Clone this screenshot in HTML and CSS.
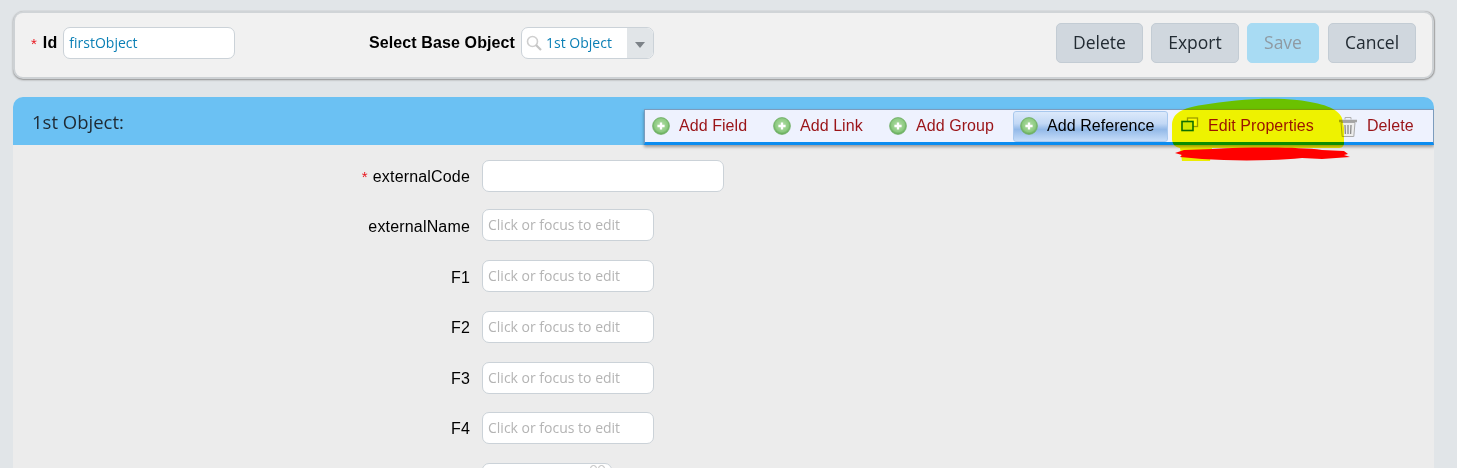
FILE: index.html
```html
<!DOCTYPE html>
<html lang="en">
<head>
<meta charset="utf-8">
<title>1st Object</title>
<link rel="stylesheet" href="styles.css">
</head>
<body>
<svg class="defs" width="0" height="0" aria-hidden="true">
  <defs>
    <radialGradient id="gball" cx="50%" cy="45%" r="55%">
      <stop offset="0" stop-color="#b4ddaa"/>
      <stop offset="0.7" stop-color="#8ecb82"/>
      <stop offset="1" stop-color="#5fa852"/>
    </radialGradient>
    <symbol id="plus" viewBox="0 0 18 18">
      <circle cx="9" cy="9" r="8.4" fill="url(#gball)" stroke="#74b06b" stroke-width="0.8"/>
      <path d="M9 5.4v7.2M5.4 9h7.2" stroke="#fff" stroke-width="2.3"/>
    </symbol>
  </defs>
</svg>
<header class="toolbar">
  <div class="field-id">
    <span class="req">*</span>
    <label class="strong">Id</label>
    <div class="input id-input">firstObject</div>
  </div>
  <div class="field-base">
    <label class="strong">Select Base Object</label>
    <div class="select">
      <svg class="search" width="16" height="16" viewBox="0 0 16 16"><circle cx="6.5" cy="6.5" r="5" fill="none" stroke="#cfcfcf" stroke-width="1.6"/><path d="M10 10l5 5" stroke="#c4c4c4" stroke-width="2.2"/></svg>
      <span class="select-value">1st Object</span>
      <span class="select-arrow"><i class="caret"></i></span>
    </div>
  </div>
  <div class="actions">
    <button class="btn btn-delete">Delete</button>
    <button class="btn btn-export">Export</button>
    <button class="btn btn-save">Save</button>
    <button class="btn btn-cancel">Cancel</button>
  </div>
</header>
<main class="panel">
  <div class="panel-head">
    <h1 class="panel-title">1st Object:</h1>
    <nav class="menu">
      <a class="item item-field"><svg class="ico"><use href="#plus"/></svg>Add Field</a>
      <a class="item item-link"><svg class="ico"><use href="#plus"/></svg>Add Link</a>
      <a class="item item-group"><svg class="ico"><use href="#plus"/></svg>Add Group</a>
      <a class="item item-ref"><svg class="ico"><use href="#plus"/></svg>Add Reference</a>
      <a class="item item-edit"><svg class="ico" viewBox="0 0 18 18"><rect x="6.5" y="1" width="10" height="8.5" fill="#fdfdc0" stroke="#9c9c30" stroke-width="1.3"/><rect x="1" y="4.5" width="11" height="9" fill="#d4e860" stroke="#0f6e0f" stroke-width="1.6"/></svg>Edit Properties</a>
      <a class="item item-del"><svg class="ico-trash" viewBox="0 0 20 21"><path d="M1 5h18" stroke="#a4a4a4" stroke-width="2.6"/><path d="M7 3.5V1.5h6v2" fill="none" stroke="#b0b0b0"/><path d="M3 6.5h14l-1.2 14H4.2z" fill="#ededed" stroke="#a8a8a8"/><path d="M7 9l.4 9M10 9v9M13 9l-.4 9" stroke="#8a8a8a" stroke-width="1.3"/></svg>Delete</a>
    </nav>
  </div>
  <form class="form">
    <div class="row row-first"><label class="lab"><span class="req">*</span> externalCode</label><div class="input wide"></div></div>
    <div class="row"><label class="lab lab-low">externalName</label><div class="input ph">Click or focus to edit</div></div>
    <div class="row"><label class="lab lab-low">F1</label><div class="input ph">Click or focus to edit</div></div>
    <div class="row"><label class="lab">F2</label><div class="input ph">Click or focus to edit</div></div>
    <div class="row row-short"><label class="lab">F3</label><div class="input ph">Click or focus to edit</div></div>
    <div class="row"><label class="lab">F4</label><div class="input ph">Click or focus to edit</div></div>
    <div class="row"><label class="lab"></label><div class="input cut"><i class="cut-mark"></i><i class="cut-mark"></i></div></div>
  </form>
</main>
<svg class="scribble hl-layer" width="200" height="75" viewBox="0 0 200 75" aria-hidden="true">
  <path class="hl" d="M0 26C1 15 10 10 30 7C60 2 95 -1 125 2C150 5 166 10 170 20L172 30L172 46C171 49 170 50 166 50L40 50L38 63L10 63L8 50C3 49 1 47 0 42Z"/>
</svg>
<svg class="scribble" width="200" height="75" viewBox="0 0 200 75" aria-hidden="true">
  <path class="red" d="M3 55L12 52L40 51C80 49 125 49 150 52L172 53L176 56L172 57L178 59L150 61L130 60C100 63 60 63 30 61L8 59L10 57Z"/>
</svg>
</body>
</html>
```

FILE: styles.css
```css
* { box-sizing: border-box; }
html, body { margin: 0; height: 468px; overflow: hidden; }
body {
  position: relative;
  padding: 11px 23px 0 13px;
  background: #e1e5e8;
  font-family: "Liberation Sans", Arial, sans-serif;
  color: #000;
}
.defs { position: absolute; }

.toolbar {
  display: flex;
  align-items: center;
  height: 68px;
  padding: 0 16px 4px 16px;
  background: #f1f1f1;
  border: 2px solid #cdd1d4;
  border-top-color: #d0d4d7;
  border-radius: 10px;
  box-shadow: 0 1px 2px #8d8d8d, 1px 0 1px #b0b0b0;
}
.field-id { display: flex; align-items: center; width: 338px; }
.req { color: #e8141c; font-size: 15px; }
.strong { font-weight: 700; font-size: 16px; letter-spacing: .11px; }
.field-id .strong { margin: 0 6px 0 6px; }
.field-base { display: flex; align-items: center; gap: 6px; }

.input {
  height: 32px;
  width: 172px;
  padding: 0 5px;
  background: #fff;
  border: 1px solid #cbd2d8;
  border-radius: 7px;
  font-family: "Open Sans", sans-serif;
  font-size: 14px;
  line-height: 30px;
  white-space: nowrap;
}
.id-input { color: #0a7fb5; }
.select {
  display: flex;
  align-items: center;
  width: 133px;
  height: 32px;
  background: #fff;
  border: 1px solid #cbd2d8;
  border-radius: 7px;
  overflow: hidden;
  font-family: "Open Sans", sans-serif;
  font-size: 14px;
  color: #0a7fb5;
}
.search { margin-left: 4px; flex: none; }
.select-value { margin: 0 0 2px 4px; flex: 1; white-space: nowrap; }
.select-arrow {
  display: flex;
  align-items: center;
  justify-content: center;
  width: 26px;
  height: 100%;
  padding-top: 4px;
  background: #e1e5e8;
}
.caret {
  border-left: 5px solid transparent;
  border-right: 5px solid transparent;
  border-top: 6px solid #7c8288;
}

.actions { margin-left: auto; display: flex; align-items: center; }
.btn {
  height: 40px;
  padding: 0 0 2px;
  background: #d0d7de;
  border: 1px solid #c3ccd4;
  border-radius: 5px;
  font-family: "Open Sans", sans-serif;
  font-size: 17.5px;
  color: #222b33;
}
.btn-delete { width: 87px; margin-right: 8px; }
.btn-export { width: 88px; margin-right: 8px; }
.btn-save { width: 72px; margin-right: 9px; background: #a8dbf3; border-color: #a8dbf3; color: #8f9aa2; }
.btn-cancel { width: 88px; }

.panel {
  margin-top: 18px;
  height: 371px;
  background: #ececec;
  border-radius: 10px 10px 0 0;
  overflow: hidden;
}
.panel-head {
  position: relative;
  height: 48px;
  padding: 12px 19px 0;
  background: #6bc1f3;
}
.panel-title {
  margin: 0;
  font-family: "Open Sans", sans-serif;
  font-weight: 400;
  font-size: 18.5px;
  line-height: 26px;
  color: #1f2a33;
}
.menu {
  position: absolute;
  top: 12px;
  right: 0;
  display: flex;
  align-items: center;
  width: 790px;
  height: 36px;
  padding: 0 0 0 7px;
  background: #eef2fe;
  border: 1px solid #7c9cbd;
  border-bottom: 3px solid #0a8cf0;
  box-shadow: 0 2px 3px rgba(0, 0, 0, .35);
  font-size: 16px;
  letter-spacing: .06px;
  line-height: 20px;
  color: #9a1418;
}
.item { display: flex; align-items: center; white-space: nowrap; }
.ico { width: 18px; height: 18px; margin-right: 9px; flex: none; }
.ico-trash { width: 20px; height: 21px; margin-right: 9px; flex: none; }
.item-field { width: 121px; }
.item-link { width: 116px; }
.item-group { width: 124px; }
.item-ref {
  width: 155px;
  height: 31px;
  margin-right: 13px;
  padding-left: 6px;
  color: #000;
  border: 1px solid #a8c8ee;
  border-radius: 3px;
  background: linear-gradient(#dce9fb 0%, #c2d8f5 40%, #93b9e8 60%, #c6ddf9 100%);
}
.item-edit { width: 157px; }

.form { height: 323px; padding-top: 15px; overflow: hidden; }
.row { display: flex; align-items: flex-start; height: 51px; }
.row-first { height: 49px; }
.row-short { height: 50px; }
.lab {
  width: 457px;
  flex: none;
  display: flex;
  justify-content: flex-end;
  gap: 5px;
  margin-right: 12px;
  font-size: 16px;
  letter-spacing: .17px;
  line-height: 34px;
  white-space: nowrap;
}
.lab-low { line-height: 36px; }
.ph { width: 172px; color: #b4b4b4; }
.wide { width: 242px; }
.cut { width: 130px; display: flex; justify-content: flex-end; gap: 1px; padding-right: 6px; }
.cut-mark { width: 7px; height: 7px; margin-top: 1px; border: 1px solid #bcbcbc; border-radius: 50%; }

.scribble {
  position: absolute;
  left: 1172px;
  top: 98px;
  pointer-events: none;
}
.hl-layer { mix-blend-mode: multiply; }
.hl { fill: #ffff00; }
.red { fill: #ff0000; }
```
